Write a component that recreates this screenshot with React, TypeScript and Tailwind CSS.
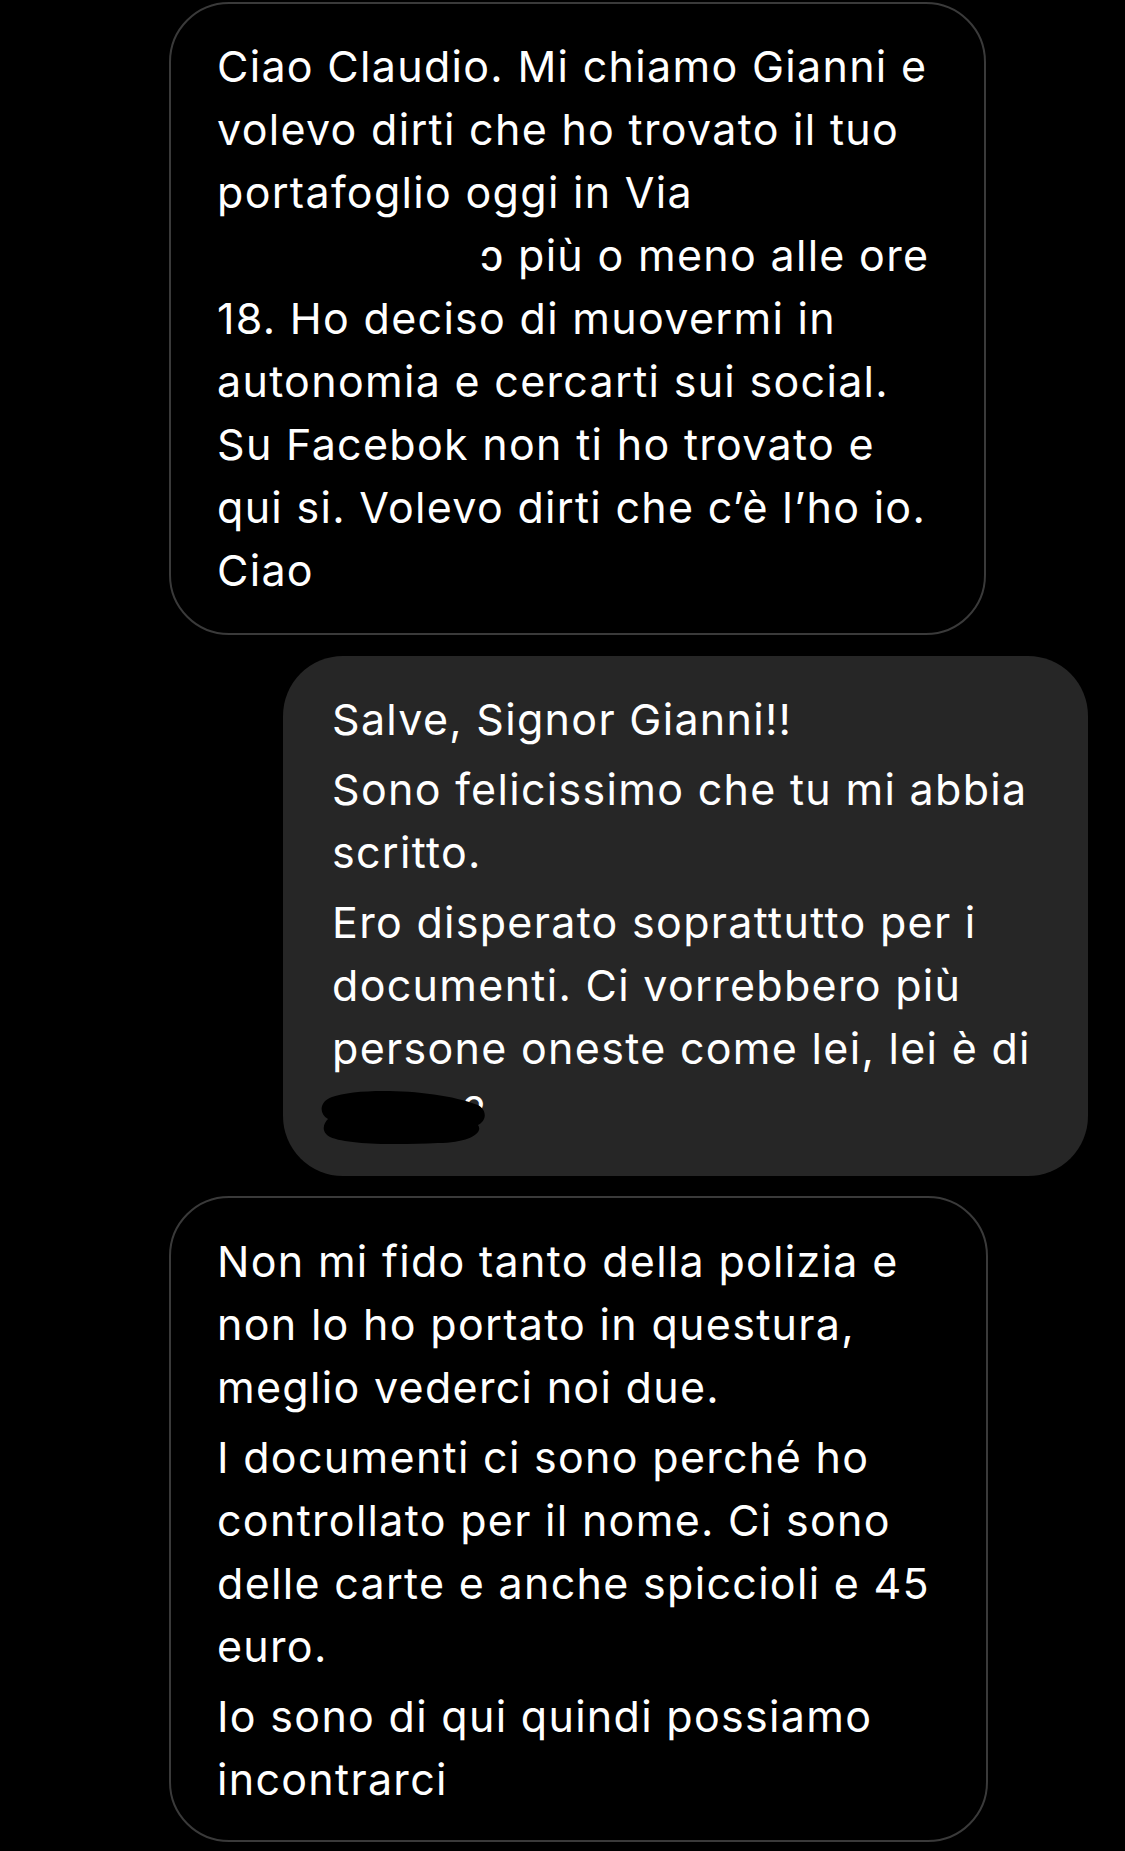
import React from "react";

type Para = React.ReactNode[];

const first: Para[] = [
  [
    "Ciao Claudio. Mi chiamo Gianni e",
    "volevo dirti che ho trovato il tuo",
    "portafoglio oggi in Via",
    <>
      <span className="inline-block w-[263px]" />
      ɔ più o meno alle ore
    </>,
    "18. Ho deciso di muovermi in",
    "autonomia e cercarti sui social.",
    "Su Facebok non ti ho trovato e",
    "qui si. Volevo dirti che c’è l’ho io.",
    "Ciao",
  ],
];

const reply: Para[] = [
  ["Salve, Signor Gianni!!"],
  ["Sono felicissimo che tu mi abbia", "scritto."],
  [
    "Ero disperato soprattutto per i",
    "documenti. Ci vorrebbero più",
    "persone oneste come lei, lei è di",
    <span className="relative">
      <span className="inline-block w-[131px]" />?
      <svg
        className="absolute left-[-14px] top-[2px]"
        width="168"
        height="60"
        viewBox="0 0 168 60"
      >
        <path
          d="M14 10 C40 0 120 2 160 18 C170 24 168 34 160 38 C166 46 150 56 120 56 C80 58 30 58 12 50 C2 44 6 36 10 32 C0 26 2 14 14 10 Z"
          fill="#000"
        />
      </svg>
    </span>,
  ],
];

const last: Para[] = [
  [
    "Non mi fido tanto della polizia e",
    "non lo ho portato in questura,",
    "meglio vederci noi due.",
  ],
  [
    "I documenti ci sono perché ho",
    "controllato per il nome. Ci sono",
    "delle carte e anche spiccioli e 45",
    "euro.",
  ],
  ["Io sono di qui quindi possiamo", "incontrarci"],
];

function Lines({ paras }: { paras: Para[] }) {
  return (
    <div className="flex flex-col gap-[7px]">
      {paras.map((p, i) => (
        <div key={i}>
          {p.map((line, j) => (
            <div key={j} className="whitespace-nowrap leading-[63px]">
              {line}
            </div>
          ))}
        </div>
      ))}
    </div>
  );
}

export default function App() {
  return (
    <div
      className="w-[1125px] h-[1851px] bg-black text-white text-[43px] tracking-[1.3px] overflow-hidden"
      style={{ fontFamily: "Inter, 'Noto Sans', sans-serif" }}
    >
      <div className="pt-[2px] flex flex-col">
        <div className="ml-[169px] w-[817px] h-[633px] border-2 border-[#3a3a3a] rounded-[60px] pl-[46px] pt-[31px]">
          <Lines paras={first} />
        </div>
        <div className="mt-[21px] ml-[283px] w-[805px] h-[520px] bg-[#262626] rounded-[60px] pl-[49px] pt-[32px]">
          <Lines paras={reply} />
        </div>
        <div className="mt-[20px] ml-[169px] w-[819px] h-[646px] border-2 border-[#3a3a3a] rounded-[60px] pl-[46px] pt-[32px]">
          <Lines paras={last} />
        </div>
      </div>
    </div>
  );
}
